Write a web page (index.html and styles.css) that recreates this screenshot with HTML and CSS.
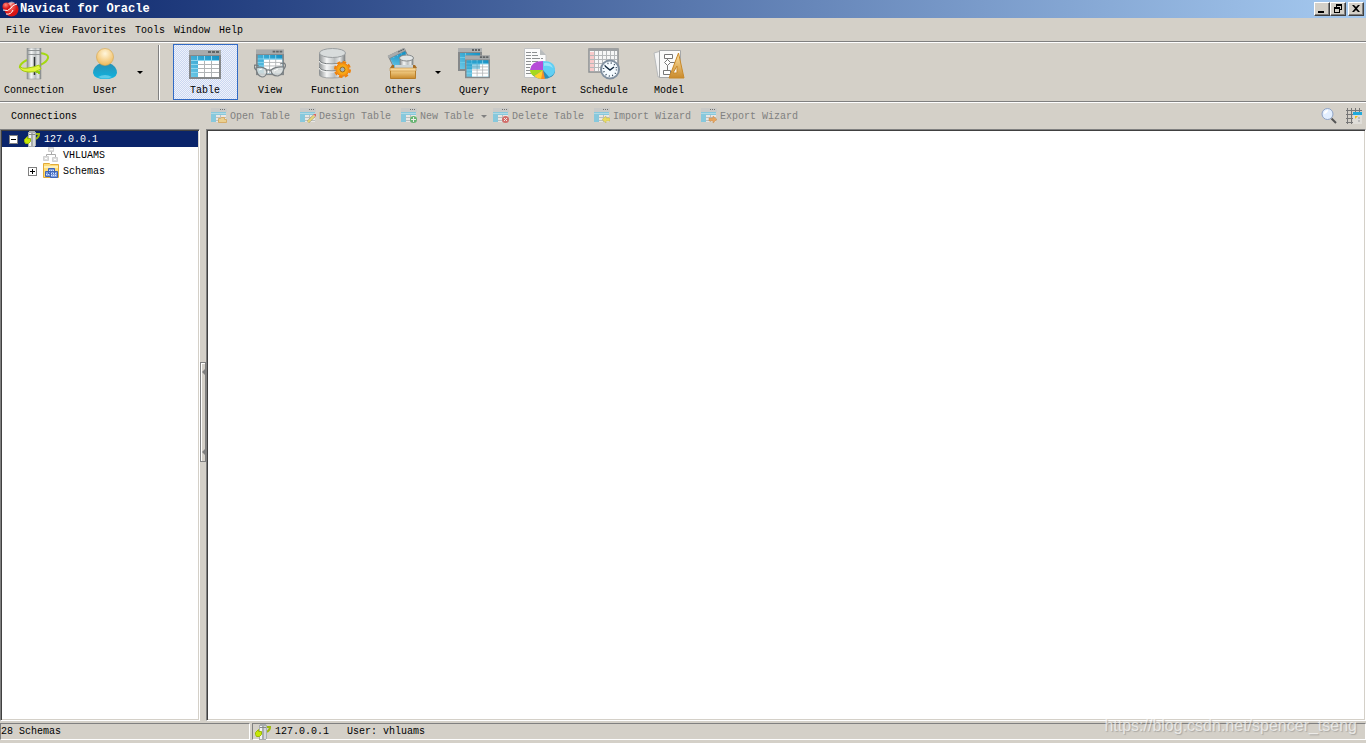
FILE: index.html
```
<!DOCTYPE html>
<html lang="en">
<head>
    <meta charset="UTF-8">
    <meta name="viewport" content="width=device-width, initial-scale=1.0">
    <title>Navicat for Oracle</title>
    <link rel="stylesheet" href="styles.css">
</head>
<body>
    <!-- shared icons -->
    <svg class="defs" width="0" height="0">
        <defs>
            <linearGradient id="gBlue" x1="0" y1="1" x2="1" y2="0"><stop offset="0" stop-color="#6cc8e6"/><stop offset="1" stop-color="#1290c4"/></linearGradient>
            <linearGradient id="gMetal"><stop offset="0" stop-color="#8b8f90"/><stop offset=".3" stop-color="#f6f7f7"/><stop offset=".6" stop-color="#b9bdbe"/><stop offset=".8" stop-color="#e8eaea"/><stop offset="1" stop-color="#7c8081"/></linearGradient>
            <linearGradient id="gBody" x1="0" y1="0" x2="0" y2="1"><stop offset="0" stop-color="#2a8fb4"/><stop offset="1" stop-color="#0fb4e0"/></linearGradient>
            <radialGradient id="gHead" cx=".5" cy=".3" r=".65"><stop offset="0" stop-color="#fff6dc"/><stop offset="1" stop-color="#f0bd62"/></radialGradient>
            <linearGradient id="gGold" x1="0" y1="0" x2="0" y2="1"><stop offset="0" stop-color="#ffe3a4"/><stop offset="1" stop-color="#c98a2c"/></linearGradient>
            <radialGradient id="gGear"><stop offset="0" stop-color="#ffd820"/><stop offset="1" stop-color="#f58a10"/></radialGradient>
            <radialGradient id="gRed" cx=".4" cy=".3"><stop offset="0" stop-color="#ff8a7c"/><stop offset="1" stop-color="#d81414"/></radialGradient>
            <symbol id="window" viewBox="0 0 32 32">
                <path fill="#85888a" d="M0 2h32v29H0z"/>
                <path fill="#a8abac" d="M0 2h32v5H0z"/>
                <path fill="#606466" d="M19 3h3v2h-3zM23 3h3v2h-3zM27 3h3v2h-3z"/>
                <path fill="url(#gBlue)" d="M2 8h28v21H2z"/>
                <path fill="#fff" d="M9 13h21v16H9z"/>
                <path fill="none" stroke="#8fd6ee" d="M2 12.500h28M2 16.500h7M2 20.500h7M2 24.500h7M8.500 8v5M15.500 8v5M22.500 8v5"/>
                <path fill="none" stroke="#b0b4b6" d="M9 16.500h21M9 20.500h21M9 24.500h21M15.500 13v16M22.500 13v16"/>
            </symbol>
            <symbol id="mini" viewBox="0 0 16 16">
                <path fill="#c4c7c8" d="M0 0h16v4H0z"/>
                <path fill="#333" d="M9 1h1v1H9zM11 1h1v1h-1zM13 1h1v1h-1z"/>
                <path fill="#55c4ea" d="M0 4h15v10H0z"/>
                <path stroke="#9be0f7" d="M0 5.500h15"/>
                <path fill="#f7f7f7" d="M5 7h10v7H5z"/>
                <path fill="none" stroke="#a9b4b8" d="M5 9.500h10M5 12.500h10M9.500 7v7"/>
            </symbol>
            <symbol id="server" viewBox="0 0 16 16">
                <path fill="none" stroke="#9db80c" stroke-width="2" d="M11 3h4q0 3-3 5"/>
                <path fill="#a9adae" d="M4 1h1V0h6v1h1v14h-1v1H4z"/>
                <path fill="#f1f2f2" d="M5 2h2v13H5z"/>
                <path fill="#d4d6d7" d="M9 2h2v13H9z"/>
                <path stroke="#858889" fill="none" d="M5 3.500h6"/>
                <path fill="#c7e805" stroke="#9ab80a" d="M.5 10.500V8.500l3-3v2h3v3l-2 2h-3z"/>
            </symbol>
        </defs>
    </svg>

    <header class="titlebar">
        <svg class="logo" viewBox="0 0 18 18">
            <circle cx="10.500" cy="9.500" r="7" fill="url(#gRed)"/>
            <circle cx="5.500" cy="6.500" r="4" fill="url(#gRed)"/>
            <path fill="none" stroke="#fff" d="M2 10q5 2 8-2 1-3 6-4M5 14q5 1 7-4"/>
            <path fill="#fff" opacity=".5" d="M7 3q4-3 7 0-3 0-5 3z"/>
        </svg>
        <h1>Navicat for Oracle</h1>
        <div class="controls">
            <button aria-label="Minimize"><svg viewBox="0 0 12 10"><path d="M2 7h6v2H2z"/></svg></button>
            <button aria-label="Restore"><svg viewBox="0 0 12 10"><path d="M4 0h6v6H8V5h1V2H5v1H4zM2 3h6v6H2zM3 5v3h4V5z" fill-rule="evenodd"/></svg></button>
            <button class="close" aria-label="Close"><svg viewBox="0 0 12 10"><path d="M2 1h2l2 2 2-2h2L7 4.500 10 8H8L6 6 4 8H2l3-3.500z"/></svg></button>
        </div>
    </header>

    <nav class="menu">
        <a href="#">File</a>
        <a href="#">View</a>
        <a href="#">Favorites</a>
        <a href="#">Tools</a>
        <a href="#">Window</a>
        <a href="#">Help</a>
    </nav>

    <div class="toolbar">
        <button class="tool">
            <svg viewBox="0 0 32 32">
                <path fill="none" stroke="#a4d910" stroke-width="2" d="M22 5q9 1 8 5-1 4-8 7M9 12q-8 4-7 8"/>
                <path fill="url(#gMetal)" stroke="#8b8e8f" stroke-width=".5" d="M9 0h14v31H9z"/>
                <path stroke="#909495" fill="none" d="M9 2.500h14M10 6.500h12"/>
                <path stroke="#303436" stroke-width="1.500" d="M16.500 9v10M16.500 24v3"/>
                <path fill="#e2f53c" stroke="#a5cc0c" d="M2 18q1 3 8 2 7-1 11-3l2 4q-6 4-13 3-9-1-8-6z"/>
                <path fill="#91cc10" d="M18 23h4v3h-2v-1h-2z"/>
            </svg>
            Connection
        </button>
        <button class="tool split user">
            <svg viewBox="0 0 32 32">
                <path fill="url(#gBody)" d="M4 25q0-7 8-10h8q8 3 8 10-1 6-12 6T4 25z"/>
                <path fill="#8ddcf2" opacity=".6" d="M9 29q7-4 14 0-7 3-14 0z"/>
                <circle cx="16" cy="9" r="8.500" fill="url(#gHead)" stroke="#d5a44c" stroke-width=".6"/>
            </svg>
            User
        </button>
        <button class="drop" aria-label="User options"></button>
        <span class="separator"></span>
        <button class="tool active">
            <svg><use href="#window"/></svg>
            Table
        </button>
        <button class="tool">
            <svg viewBox="0 0 32 32">
                <use href="#window" x="2" y="0" width="28" height="28"/>
                <g fill="#d6dadb" fill-opacity=".85" stroke="#777d80" stroke-width="1.200">
                    <path fill="none" d="M2 22q-3-3-1-5l4 1M30 21q3-4 0-6l-4 1"/>
                    <path d="M2 20q5-2 10 1l1 3q-1 5-5 5-5-1-6-9z"/>
                    <path d="M17 22q5-4 13-3 0 7-6 9-7 0-7-6z"/>
                    <path fill="none" d="M12 23q2-2 5 0"/>
                </g>
                <path stroke="#fff" d="M5 22l3-1M20 23l4-2"/>
            </svg>
            View
        </button>
        <button class="tool">
            <svg viewBox="0 0 32 32">
                <path fill="url(#gMetal)" stroke="#8d9193" stroke-width=".7" d="M0 5v21q0 4 13 4t13-4V5z"/>
                <path fill="none" stroke="#74797b" d="M0 12q1 4 13 4t13-4M0 19q1 4 13 4t13-4"/>
                <path fill="none" stroke="#f4f5f5" d="M0 13q1 4 13 4t13-4M0 20q1 4 13 4t13-4"/>
                <ellipse cx="13.500" cy="5" rx="13" ry="4.500" fill="#d8dcdc" stroke="#9a9ea0"/>
                <circle cx="23.500" cy="21.500" r="7.500" fill="none" stroke="#f08008" stroke-width="2" stroke-dasharray="3.500 2.390"/>
                <circle cx="23.500" cy="21.500" r="6.500" fill="url(#gGear)" stroke="#ee8610"/>
                <circle cx="23.500" cy="21.500" r="2.500" fill="#a8b6bd" stroke="#9a6416"/>
            </svg>
            Function
        </button>
        <button class="tool split others">
            <svg viewBox="0 0 32 32">
                <g transform="rotate(-26 12 11)"><use href="#window" x="3" y="2" width="19" height="19"/><path fill="url(#gBlue)" d="M5 8h15v11H5z"/></g>
                <path fill="url(#gMetal)" stroke="#85898a" stroke-width=".7" d="M13 10v9h13v-9z"/>
                <ellipse cx="19.500" cy="10" rx="7" ry="3" fill="#e2e5e5" stroke="#85898a"/>
                <path fill="#a66c24" d="M5 17h2v3H3zM26 17h2l2 3h-4z"/>
                <path fill="#ccd4d6" d="M8 17h18v4H8z"/>
                <path fill="url(#gGold)" stroke="#b77d2a" d="M3.500 20.500h25v10h-25z"/>
                <path fill="#f8d595" stroke="#b77d2a" stroke-width=".5" d="M3 20h26v3H3z"/>
            </svg>
            Others
        </button>
        <button class="drop" aria-label="Other objects"></button>
        <button class="tool">
            <svg viewBox="0 0 32 32">
                <path fill="#85888a" d="M0 0h24v23H0z"/>
                <path fill="#adb0b1" d="M0 0h24v4H0z"/>
                <path fill="#606466" d="M14 1h2v2h-2zM17 1h2v2h-2zM20 1h2v2h-2z"/>
                <path fill="url(#gBlue)" d="M2 5h20v16H2z"/>
                <path stroke="#69c8e5" d="M2 9.500h20M2 14.500h20M7.500 5v16"/>
                <use href="#window" x="7" y="6" width="25" height="25"/>
                <path fill="#1d9bca" opacity=".45" d="M9 13h13v8H9z"/>
            </svg>
            Query
        </button>
        <button class="tool">
            <svg viewBox="0 0 32 32">
                <path fill="#fbfbfb" stroke="#c2c3c4" d="M1.500.5H17l6 7v22H1.500z"/>
                <path fill="#b9bcbd" d="M17 1v6h6z"/>
                <path stroke="#8d9092" stroke-dasharray="5 1 8 1" d="M3 4.500h11M3 7.500h12M3 10.500h17M3 13.500h12M3 16.500h5M3 19.500h4M3 22.500h4M3 25.500h5"/>
                <ellipse cx="20" cy="23" rx="12" ry="8" fill="#2c8fb8"/>
                <path fill="#61cff4" d="M20 22V13q12 0 12 9 0 5-6 7z"/>
                <path fill="#b64bd8" d="M20 22H7q1-9 13-9z"/>
                <path fill="#a5d91c" d="M20 22l-9 6q-4-2-4-6z"/>
                <path fill="#ffd22a" d="M20 22l-1 9q-5 0-8-3z"/>
                <path fill="#f78f28" d="M20 22l2 9h-4z"/>
                <path fill="#b9efff" opacity=".6" d="M21 15q7-1 9 5-4-3-9-2z"/>
            </svg>
            Report
        </button>
        <button class="tool">
            <svg viewBox="0 0 32 32">
                <path fill="#f6f6f6" stroke="#8d9092" stroke-width="1.500" d="M1 1h29v23H1z"/>
                <path fill="#9da0a2" d="M1 1h29v2H1z"/>
                <path fill="#f8c9c9" d="M2 4h4v19H2z"/>
                <path stroke="#b5b8ba" d="M2 7.500h27M2 11.500h27M2 15.500h27M2 19.500h27M6.500 3v20M10.500 3v20M14.500 3v20M18.500 3v20M22.500 3v20M26.500 3v20"/>
                <circle cx="22" cy="21.500" r="9" fill="#f5fbff" stroke="#8090a0" stroke-width="2"/>
                <circle cx="22" cy="21.500" r="6.500" fill="none" stroke="#35495c" stroke-width="1.500" stroke-dasharray="1 2.400"/>
                <path fill="none" stroke="#152c42" stroke-width="1.500" d="M17 18l5 4 4-3"/>
            </svg>
            Schedule
        </button>
        <button class="tool">
            <svg viewBox="0 0 32 32">
                <path fill="#f4f4f4" stroke="#b8babb" d="M1 5l7-2 3 25-6 1z"/>
                <path fill="#fafafa" stroke="#a5a7a8" d="M6.500 2.500h21v27h-21z"/>
                <g fill="#fff" stroke="#777">
                    <path fill="none" d="M14.500 10v14M15 14.500h9v-5"/>
                    <path d="M11.500 6.500h8v4h-8zM14.500 11.500l3 3-3 3-3-3zM10.500 22.500h7v4h-7z"/>
                </g>
                <path fill="url(#gGold)" fill-rule="evenodd" stroke="#c98929" d="M25.500 5l5.500 25H16zM24 18v7h-4z"/>
            </svg>
            Model
        </button>
    </div>

    <div class="subbar">
        <h2>Connections</h2>
        <div class="actions">
            <button disabled><svg viewBox="0 0 16 16"><use href="#mini"/><path fill="#f9cf6a" stroke="#d9962b" d="M7.500 10.500h2l1-1h3v2h2v3h-8z"/></svg>Open Table</button>
            <button disabled><svg viewBox="0 0 16 16"><use href="#mini"/><path stroke="#85733e" stroke-width="3" d="M8 14l6-6"/><path stroke="#f5dd42" stroke-width="2" d="M8 14l6-6"/><path fill="#d22" d="M13 6h3v3z"/></svg>Design Table</button>
            <button disabled><svg viewBox="0 0 16 16"><use href="#mini"/><circle cx="12.500" cy="11.500" r="3.500" fill="#1fa43a"/><path stroke="#fff" d="M10 11.500h5M12.500 9v5"/></svg>New Table</button>
            <button class="drop" disabled aria-label="New table options"></button>
            <button disabled><svg viewBox="0 0 16 16"><use href="#mini"/><circle cx="12.500" cy="11.500" r="3.500" fill="#d22c2c"/><path stroke="#fff" d="M11 10l3 3M14 10l-3 3"/></svg>Delete Table</button>
            <button disabled><svg viewBox="0 0 16 16"><use href="#mini"/><path fill="#f7e31c" stroke="#b7a50c" stroke-width=".5" d="M8 11.500L12 8v2h4v3h-4v2z"/></svg>Import Wizard</button>
            <button disabled><svg viewBox="0 0 16 16"><use href="#mini"/><path fill="#f58a18" stroke="#b8620c" stroke-width=".5" d="M16 11.500L12 8v2H8v3h4v2z"/></svg>Export Wizard</button>
        </div>
        <div class="right">
            <button aria-label="Search"><svg viewBox="0 0 16 16"><path stroke="#555" stroke-width="2" d="M10.500 10.500l4.500 4.500"/><circle cx="6.500" cy="6" r="5.500" fill="#e3efff" stroke="#8fa3c6"/><path fill="#fff" d="M3 6q0-4 4-4 0 3-4 4z"/></svg></button>
            <button aria-label="View options"><svg viewBox="0 0 16 16"><path stroke="#777" d="M0 2.500h16M0 6.500h8M0 10.500h8M0 14.500h8M1.500 0v16M5.500 0v16M9.500 0v5M13.500 0v5"/><path fill="#dfddd8" d="M7 5h9v11H7z"/><path fill="#21aadb" d="M7 4h9v3H7z"/><path fill="#f3c31c" d="M9 8h3l-3 3z"/><path fill="#bbb" d="M12 9h2v2h-2zM12 12h2v2h-2z"/></svg></button>
        </div>
    </div>

    <main class="workspace">
        <aside class="tree">
            <ul>
                <li class="selected">
                    <button class="toggle" aria-label="Collapse"><svg viewBox="0 0 9 9"><path stroke="#000" d="M2 4.500h5"/></svg></button>
                    <svg class="icon"><use href="#server"/></svg>
                    <span>127.0.0.1</span>
                </li>
                <li class="child leaf">
                    <svg class="icon" viewBox="0 0 16 16"><path fill="none" stroke="#aaa" d="M8.500 5v3M3.500 10V7.500h9V11"/><path fill="#dedede" stroke="#d0d0d0" d="M5.500.5h5v4h-5zM.5 9.500h5v4h-5zM9.500 10.500h5v4h-5z"/><path stroke="#fff" d="M7 2.500h3M2 11.500h2M11 12.500h2"/></svg>
                    <span>VHLUAMS</span>
                </li>
                <li class="child">
                    <button class="toggle" aria-label="Expand"><svg viewBox="0 0 9 9"><path stroke="#000" d="M2 4.500h5M4.500 2v5"/></svg></button>
                    <svg class="icon" viewBox="0 0 16 16"><path fill="#ffdc76" stroke="#e2aa38" d="M.5 14.500V.5h6l1 1h8v13z"/><path fill="#fff0b8" d="M1 3h14v2H1z"/><path fill="#7e9de0" stroke="#3f65b5" d="M2.500 8.500h5v5h-5zM5.500 5.500h6v5h-6zM7.500 8.500h7v6h-7z"/><path stroke="#d8e6ff" stroke-dasharray="1 1" d="M6 7.500h5M8 10.500h6M8 12.500h6M3 11.500h4"/></svg>
                    <span>Schemas</span>
                </li>
            </ul>
        </aside>
        <div class="splitter">
            <button class="grip" aria-label="Hide connections"><i></i><i></i></button>
        </div>
        <section class="content"></section>
    </main>

    <footer class="statusbar">
        <div class="count">28 Schemas</div>
        <div class="session">
            <svg class="icon"><use href="#server"/></svg>
            <span>127.0.0.1</span>
            <span class="who">User: vhluams</span>
        </div>
    </footer>
    <div class="watermark">https://blog.csdn.net/spencer_tseng</div>
</body>
</html>
```
FILE: styles.css
```
* {
    box-sizing: border-box;
}
body {
    margin: 0;
    height: 100vh;
    display: flex;
    flex-direction: column;
    overflow: hidden;
    background: #d4d0c8;
    color: #000;
    font: 10px/16px "Liberation Mono", monospace;
}
button {
    margin: 0;
    padding: 0;
    border: 0;
    background: none;
    color: inherit;
    font: inherit;
}
svg {
    display: block;
    flex: none;
}
h1, h2, ul {
    margin: 0;
    padding: 0;
}
.defs {
    position: absolute;
}
.titlebar {
    display: flex;
    align-items: center;
    height: 18px;
    padding: 0 2px 0 1px;
    background: linear-gradient(to right, #0a246a, #a6caf0);
    color: #fff;
}
.logo {
    width: 18px;
    height: 18px;
}
h1 {
    padding-left: 1px;
    font-size: 12px;
    line-height: 18px;
}
.controls {
    display: flex;
    margin-left: auto;
}
.controls button {
    width: 16px;
    height: 14px;
    padding: 1px;
    background: #d4d0c8;
    border: 1px solid;
    border-color: #fff #404040 #404040 #fff;
    box-shadow: inset -1px -1px #808080;
}
.controls svg {
    width: 12px;
    height: 10px;
}
.controls .close {
    margin-left: 2px;
}
.menu {
    display: flex;
    gap: 9px;
    height: 24px;
    padding: 5px 6px 0;
    border-bottom: 1px solid #808080;
}
.menu a {
    color: #000;
    text-decoration: none;
}
.toolbar {
    display: flex;
    height: 60px;
    padding: 1px 2px 0;
    border-top: 1px solid #fff;
    border-bottom: 1px solid #808080;
}
.tool {
    display: flex;
    flex-direction: column;
    align-items: center;
    width: 65px;
    height: 56px;
    padding: 3px 1px 0 0;
    border: 1px solid transparent;
}
.tool svg {
    width: 32px;
    height: 32px;
    margin-bottom: 3px;
}
.tool.active {
    border-color: #316ac5;
    background: repeating-conic-gradient(#eef2fb 0 25%, #cad7f1 0 50%) 0 0 / 2px 2px;
}
.tool.split {
    width: 61px;
}
.user {
    margin-left: 8px;
}
.others {
    margin-left: 5px;
}
.drop {
    width: 8px;
}
.drop::before {
    content: "";
    display: block;
    width: 0;
    margin: auto;
    border: 3px solid transparent;
    border-top-color: currentColor;
    border-bottom: 0;
}
.separator {
    width: 2px;
    margin: 1px 13px 1px 14px;
    border-left: 1px solid #808080;
    border-right: 1px solid #fff;
}
.subbar {
    display: flex;
    align-items: center;
    height: 27px;
    border-top: 1px solid #fff;
}
h2 {
    width: 211px;
    height: 16px;
    padding-left: 11px;
    font-size: 10px;
    font-weight: normal;
    line-height: 18px;
}
.actions {
    display: flex;
    align-items: center;
    gap: 10px;
    color: #808080;
}
.actions button {
    display: flex;
    gap: 3px;
    height: 16px;
    line-height: 18px;
}
.actions svg {
    width: 16px;
    height: 16px;
    opacity: .6;
}
.actions .drop {
    align-items: center;
    width: 6px;
    margin: 0 -4px 0 -3px;
}
.right {
    display: flex;
    gap: 9px;
    margin-left: auto;
    padding-right: 4px;
}
.right svg, .icon {
    width: 16px;
    height: 16px;
}
.workspace {
    flex: 1;
    display: flex;
    min-height: 0;
}
.tree, .content {
    background: #fff;
    border: 1px solid;
    border-color: #808080 #fff #fff #808080;
    box-shadow: inset 1px 1px #404040, inset -1px -1px #d4d0c8;
}
.tree {
    width: 200px;
    padding: 1px;
}
.content {
    flex: 1;
}
.tree li {
    display: flex;
    height: 16px;
    padding-left: 7px;
}
.tree .child {
    padding-left: 26px;
}
.tree .leaf {
    padding-left: 41px;
}
.tree .selected {
    background: #0a246a;
    color: #fff;
}
.tree span {
    padding-left: 4px;
    line-height: 18px;
}
.toggle {
    width: 9px;
    height: 9px;
    margin: 4px 6px 0 0;
    background: #fff;
    outline: 1px solid #808080;
    outline-offset: -1px;
}
.toggle svg {
    width: 9px;
    height: 9px;
}
.splitter {
    display: flex;
    align-items: center;
    width: 6px;
    padding-bottom: 26px;
}
.grip {
    display: flex;
    flex-direction: column;
    justify-content: space-between;
    width: 6px;
    height: 100px;
    padding: 6px 0;
    border: 1px solid #808080;
    box-shadow: inset 1px 1px #fff;
}
.grip i {
    border: 3px solid transparent;
    border-left: 0;
    border-right-color: #808080;
}
.statusbar {
    display: flex;
    gap: 2px;
    height: 23px;
    padding: 2px 0 3px;
    border-bottom: 1px solid #fff;
}
.statusbar > div {
    border: 1px solid;
    border-color: #808080 #fff #fff #808080;
}
.count {
    width: 250px;
}
.session {
    flex: 1;
    display: flex;
    padding-left: 2px;
}
.session span {
    padding-left: 4px;
}
.session .who {
    padding-left: 18px;
}
.watermark {
    position: absolute;
    right: 9px;
    bottom: 8px;
    color: rgba(255, 255, 255, .65);
    font: 16px/20px "Liberation Sans", sans-serif;
    text-shadow: 1px 1px 1px rgba(120, 120, 120, .45);
}
```
